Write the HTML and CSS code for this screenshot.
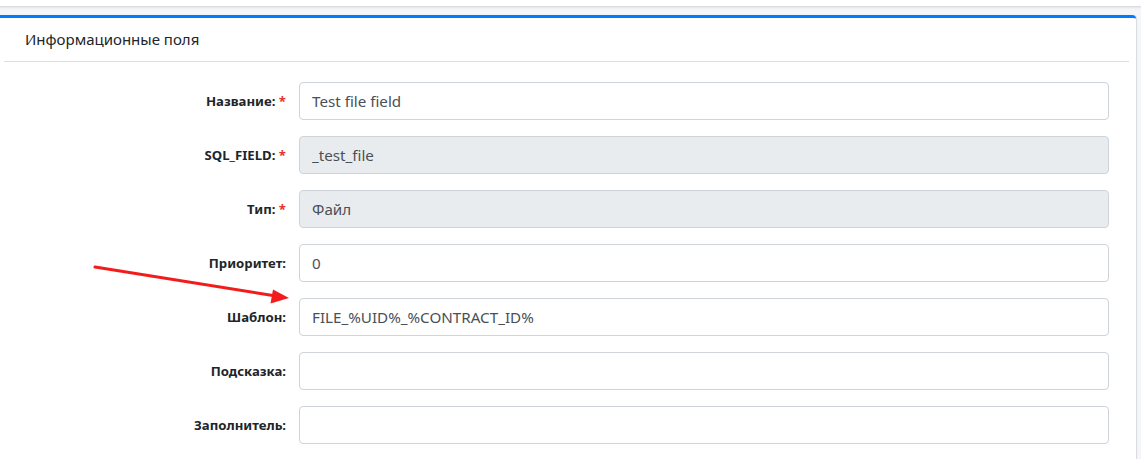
FILE: index.html
```html
<!DOCTYPE html>
<html lang="ru">
<head>
<meta charset="utf-8">
<title>Информационные поля</title>
<link rel="stylesheet" href="styles.css">
</head>
<body>
<div class="topbar"></div>
<div class="content">
  <div class="card">
    <div class="card-header">Информационные поля</div>
    <div class="card-body">
      <div class="row">
        <label class="lbl">Название: <span class="req">*</span></label>
        <input class="field" type="text" value="Test file field">
      </div>
      <div class="row">
        <label class="lbl">SQL_FIELD: <span class="req">*</span></label>
        <input class="field" type="text" value="_test_file" disabled>
      </div>
      <div class="row">
        <label class="lbl">Тип: <span class="req">*</span></label>
        <input class="field" type="text" value="Файл" disabled>
      </div>
      <div class="row">
        <label class="lbl">Приоритет:</label>
        <input class="field" type="text" value="0">
      </div>
      <div class="row">
        <label class="lbl">Шаблон:</label>
        <input class="field" type="text" value="FILE_%UID%_%CONTRACT_ID%">
      </div>
      <div class="row">
        <label class="lbl">Подсказка:</label>
        <input class="field" type="text" value="">
      </div>
      <div class="row">
        <label class="lbl">Заполнитель:</label>
        <input class="field" type="text" value="">
      </div>
    </div>
  </div>
</div>
<svg class="arrow" width="1141" height="459" viewBox="0 0 1141 459">
  <line x1="95" y1="267" x2="276" y2="296" stroke="#f21c1c" stroke-width="3" stroke-linecap="round"/>
  <polygon points="289,298 273,289.5 270.5,303.5" fill="#f21c1c"/>
</svg>
</body>
</html>
```
FILE: styles.css
```css
html, body {
  margin: 0;
  padding: 0;
}
body {
  background: #f4f6f9;
  font-family: "Segoe UI", "Noto Sans", "Open Sans", sans-serif;
  color: #212529;
  width: 1141px;
  height: 459px;
  overflow: hidden;
  position: relative;
}
.topbar {
  height: 6px;
  background: #fff;
  border-bottom: 1px solid #dcdcdc;
  box-shadow: 0 1px 2px rgba(0,0,0,0.08);
}
.content {
  padding-top: 8px;
}
.card {
  width: 1136px;
  background: #fff;
  border-top: 3px solid #007bff;
  border-radius: 0 4px 0 0;
  box-shadow: 1px 0 1px rgba(0,0,0,0.12);
  height: 441px;
  overflow: hidden;
}
.card-header {
  margin: 0 7px 0 4px;
  padding: 0 21px;
  height: 43px;
  line-height: 43px;
  font-size: 15px;
  color: #212529;
  border-bottom: 1px solid #dfdfdf;
}
.card-body {
  padding: 20px 27px 0 0;
  display: flex;
  flex-direction: column;
  gap: 16px;
}
.row {
  display: grid;
  grid-template-columns: 286px 810px;
  column-gap: 13px;
  align-items: center;
}
.lbl {
  text-align: right;
  font-weight: 700;
  font-size: 13.2px;
  color: #212529;
}
.req {
  color: #e3342f;
}
.field {
  box-sizing: border-box;
  height: 38px;
  width: 810px;
  margin: 0;
  padding: 0 12px;
  border: 1px solid #ced4da;
  border-radius: 4px;
  background: #fff;
  font-family: inherit;
  font-size: 15.2px;
  color: #495057;
  outline: none;
}
.field:disabled {
  background: #e9ecef;
  color: #495057;
  opacity: 1;
}
.arrow {
  position: absolute;
  left: 0;
  top: 0;
  pointer-events: none;
}
```
